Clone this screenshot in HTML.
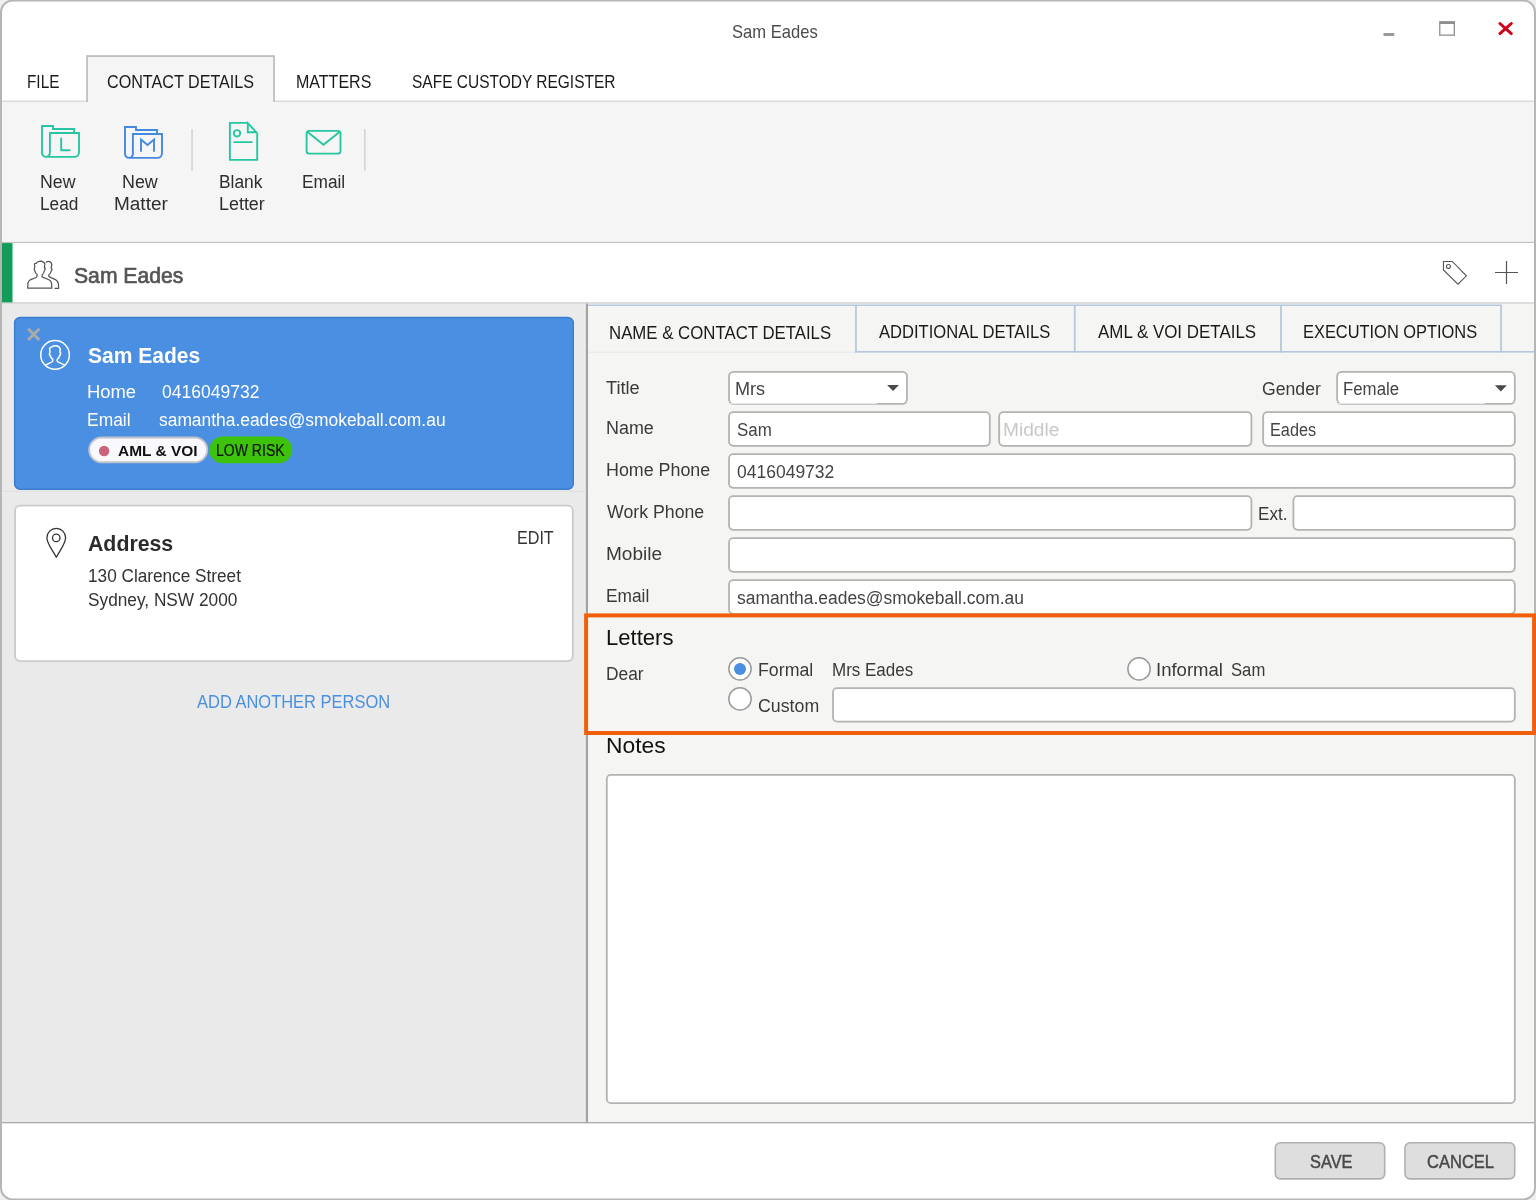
<!DOCTYPE html>
<html><head><meta charset="utf-8"><title>Sam Eades</title>
<style>
html,body{margin:0;padding:0;}
body{width:1536px;height:1200px;overflow:hidden;position:relative;background:#f0f0f0;font-family:"Liberation Sans",sans-serif;}
.t{position:absolute;white-space:nowrap;line-height:1;transform-origin:0 0;}
#tx{position:absolute;left:0;top:0;width:1536px;height:1200px;will-change:transform;}
svg{position:absolute;left:0;top:0;overflow:visible;}
</style></head><body>
<svg width="1536" height="1200" viewBox="0 0 1536 1200" fill="none">
<rect x="0" y="0" width="1536" height="1200" fill="#fff"/>
<rect x="0" y="101.7" width="1536" height="140.3" fill="#f5f5f5"/>
<rect x="0" y="100.6" width="1536" height="1.2" fill="#d2d2d2"/>
<rect x="0" y="241.9" width="1536" height="1.2" fill="#c0c0c0"/>
<rect x="86.2" y="55.2" width="188.7" height="46.8" fill="#bdbdbd"/>
<rect x="87.9" y="57.0" width="185.3" height="45.2" fill="#f5f5f5"/>
<rect x="191.2" y="129" width="1.7" height="41.6" fill="#d6d6d6"/>
<rect x="364.0" y="129" width="1.7" height="41.6" fill="#d6d6d6"/>
<rect x="0" y="243.1" width="1536" height="59.4" fill="#fff"/>
<rect x="0" y="302.4" width="1536" height="1.3" fill="#c4c4c4"/>
<rect x="2" y="243.1" width="10.5" height="59.3" fill="#119d58"/>
<rect x="0" y="303.7" width="586" height="818.3" fill="#eaeaea"/>
<rect x="588" y="303.7" width="948" height="818.3" fill="#f5f5f3"/>
<rect x="585.9" y="303.7" width="2.1" height="819.7" fill="#a2a2a2"/>
<rect x="0" y="1122" width="1536" height="1.6" fill="#adadad"/>
<rect x="0" y="1123.6" width="1536" height="76.4" fill="#fff"/>
<rect x="588" y="304.5" width="913.8" height="1.5" fill="#b7c9df"/>
<rect x="588" y="351.7" width="268" height="0.9" fill="#e1e6ed"/>
<rect x="855.1" y="351.0" width="678.9" height="1.6" fill="#b4c7dc"/>
<rect x="855.1" y="305" width="1.7" height="47.6" fill="#b4c7dc"/>
<rect x="1073.9" y="305" width="1.7" height="47.6" fill="#b4c7dc"/>
<rect x="1280.1" y="305" width="1.7" height="47.6" fill="#b4c7dc"/>
<rect x="1500.2" y="305" width="1.7" height="47.6" fill="#b4c7dc"/>
<rect x="14.65" y="317.45" width="558.60" height="171.80" rx="5.5" ry="5.5" stroke="#3d7dcf" stroke-width="1.5" fill="#4a8fe1"/>
<rect x="2" y="490.7" width="584" height="1.2" fill="#e0e0e0"/>
<rect x="89.15" y="437.45" width="118.10" height="24.80" rx="12.4" ry="12.4" stroke="#c0c2cc" stroke-width="1.9" fill="#f8f8fd"/>
<circle cx="104.1" cy="451" r="5.2" fill="#cb6478"/>
<rect x="209.3" y="436.5" width="82.9" height="26.7" rx="13.35" ry="13.35" fill="#3cc30a"/>
<rect x="15.10" y="505.70" width="557.70" height="155.40" rx="5" ry="5" stroke="#cbcbcb" stroke-width="1.8" fill="#fff"/>
<rect x="729.00" y="371.90" width="178.00" height="32.00" rx="4.6" ry="4.6" stroke="#b3b3b1" stroke-width="1.8" fill="#fff"/>
<rect x="731" y="402.7" width="146.1" height="1.0" fill="#fff"/>
<rect x="1337.10" y="371.90" width="177.70" height="32.00" rx="4.6" ry="4.6" stroke="#b3b3b1" stroke-width="1.8" fill="#fff"/>
<rect x="1339" y="402.7" width="146" height="1.0" fill="#fff"/>
<rect x="729.00" y="412.20" width="260.80" height="33.60" rx="4.2" ry="4.2" stroke="#b3b3b1" stroke-width="1.8" fill="#fff"/>
<rect x="999.20" y="412.20" width="252.20" height="33.60" rx="4.2" ry="4.2" stroke="#b3b3b1" stroke-width="1.8" fill="#fff"/>
<rect x="1263.20" y="412.20" width="251.60" height="33.60" rx="4.2" ry="4.2" stroke="#b3b3b1" stroke-width="1.8" fill="#fff"/>
<rect x="729.00" y="454.20" width="785.80" height="33.60" rx="4.2" ry="4.2" stroke="#b3b3b1" stroke-width="1.8" fill="#fff"/>
<rect x="729.00" y="496.20" width="522.40" height="33.60" rx="4.2" ry="4.2" stroke="#b3b3b1" stroke-width="1.8" fill="#fff"/>
<rect x="1293.40" y="496.20" width="221.40" height="33.60" rx="4.2" ry="4.2" stroke="#b3b3b1" stroke-width="1.8" fill="#fff"/>
<rect x="729.00" y="538.20" width="785.80" height="33.60" rx="4.2" ry="4.2" stroke="#b3b3b1" stroke-width="1.8" fill="#fff"/>
<rect x="729.00" y="580.20" width="785.80" height="33.60" rx="4.2" ry="4.2" stroke="#b3b3b1" stroke-width="1.8" fill="#fff"/>
<rect x="833.00" y="688.20" width="681.80" height="33.40" rx="4.2" ry="4.2" stroke="#b3b3b1" stroke-width="1.8" fill="#fff"/>
<rect x="606.80" y="774.90" width="908.00" height="328.20" rx="4.2" ry="4.2" stroke="#b3b3b1" stroke-width="1.8" fill="#fff"/>
<circle cx="740" cy="668.85" r="11.15" stroke="#9a9a9a" stroke-width="1.5" fill="#fff"/>
<circle cx="740" cy="669.05" r="6" fill="#4a8fe1"/>
<circle cx="740" cy="698.9" r="11.15" stroke="#9a9a9a" stroke-width="1.5" fill="#fff"/>
<circle cx="1139.05" cy="668.9" r="11.15" stroke="#9a9a9a" stroke-width="1.5" fill="#fff"/>
<rect x="1275.30" y="1142.80" width="109.40" height="36.10" rx="5" ry="5" stroke="#b0b0b0" stroke-width="1.6" fill="#dedede"/>
<rect x="1405.00" y="1142.80" width="109.70" height="36.10" rx="5" ry="5" stroke="#b0b0b0" stroke-width="1.6" fill="#dedede"/>
<rect x="1383.5" y="33" width="10.7" height="3" fill="#9a9a9a"/>
<rect x="1439.1" y="21.1" width="15.9" height="14.7" fill="#8f8f8f"/>
<rect x="1440.4" y="24.0" width="13.3" height="10.5" fill="#fff"/>
<path d="M1499.9,23.5 L1511.3,33.6 M1511.3,23.5 L1499.9,33.6" stroke="#d0021b" stroke-width="3" stroke-linecap="round"/>
<g stroke="#27c6a1" stroke-width="1.9" stroke-linejoin="miter">
<path d="M74,133 L74,129 L53,129 L53,126 L42,126 L42,152.4 A4,4.4 0 0 0 46,156.9 L74.4,156.9 A4.6,4.6 0 0 0 79,152.3 L79,133 L49.9,133 L49.9,152.4 A4,4.4 0 0 1 45.9,156.9"/>
<path d="M61.2,138.4 L61.2,150.3 L69.6,150.3" stroke-linecap="round"/>
</g>
<g stroke="#4389e1" stroke-width="1.9" transform="translate(83,1)">
<path d="M74,133 L74,129 L53,129 L53,126 L42,126 L42,152.4 A4,4.4 0 0 0 46,156.9 L74.4,156.9 A4.6,4.6 0 0 0 79,152.3 L79,133 L49.9,133 L49.9,152.4 A4,4.4 0 0 1 45.9,156.9"/>
<path d="M58,150.8 L58,138.6 L64.55,144 L71,138.6 L71,150.8" stroke-linejoin="miter"/>
</g>
<g stroke="#27c6a1" stroke-width="1.9">
<path d="M246.9,122.9 L229.9,122.9 L229.9,159.9 L257.2,159.9 L257.2,133.2"/>
<path d="M247.8,123.2 L247.8,132.3 L256.4,132.3 Z" stroke-linejoin="miter"/>
<circle cx="237" cy="133.3" r="3.2"/>
<path d="M234.2,142.2 L251.8,142.2" stroke-width="1.7" stroke-linecap="round"/>
</g>
<g stroke="#27c6a1" stroke-width="1.9">
<rect x="306.6" y="130.9" width="33.9" height="22.7" rx="2.6" ry="2.6"/>
<path d="M307.3,131.8 L323.5,144.7 L339.8,131.8"/>
</g>
<g stroke="#555" stroke-width="1.25" stroke-linejoin="round" stroke-linecap="round" transform="translate(20,252) scale(0.0375)">
<path vector-effect="non-scaling-stroke" d="M205,965 L212,830 Q220,770 270,745 L430,680 Q458,665 455,600 Q410,570 395,500 Q360,450 395,410 L385,320 Q385,300 430,300 Q470,250 545,245 Q640,250 665,320 L648,410 Q690,440 650,500 Q640,570 590,605 Q580,660 600,672 L770,740 Q830,770 840,830 L850,965 Z"/>
<path vector-effect="non-scaling-stroke" d="M700,272 Q730,248 770,250 Q840,262 850,340 L830,420 Q870,455 835,500 Q825,575 768,615 Q760,655 785,665 L960,745 Q1015,780 1025,850 L1030,970 L935,970"/>
</g>
<path d="M28.06,328.76 L39.34,340.04 M39.34,328.76 L28.06,340.04" stroke="#aaa" stroke-width="3"/>
<g stroke="#fff" stroke-width="1.5" stroke-linejoin="round">
<circle cx="55.05" cy="354.9" r="14.3"/>
<g transform="translate(20,320) scale(0.04583)">
<path vector-effect="non-scaling-stroke" d="M555,985 L700,915 Q725,900 715,860 Q680,830 665,790 Q625,740 655,700 L645,630 Q650,590 700,582 Q735,555 790,560 Q870,575 880,640 L870,700 Q905,735 860,790 Q850,830 810,862 Q800,900 825,915 L975,985"/>
</g>
</g>
<g stroke="#333" stroke-width="1.3">
<path d="M56.3,557.2 C52,549.5 46.9,543.5 46.9,537.8 A9.35,9.4 0 0 1 65.6,537.8 C65.6,543.5 60.6,549.5 56.3,557.2 Z" stroke-linejoin="round"/>
<circle cx="56.25" cy="537.9" r="3.75"/>
</g>
<g stroke="#555" stroke-width="1.1">
<path d="M1443.45,261.45 L1452.3,261.45 L1466.4,275.85 L1458,284.25 L1443.45,270 Z" stroke-linejoin="miter"/>
<circle cx="1448.4" cy="266.4" r="1.95"/>
</g>
<path d="M1495,272.5 L1518,272.5 M1506.5,261 L1506.5,284" stroke="#555" stroke-width="1.2"/>
<path d="M887.1,385 L899,385 L893.05,391.1 Z" fill="#4a4a4a"/>
<path d="M1494.9,385.3 L1506.8,385.3 L1500.85,391.4 Z" fill="#4a4a4a"/>
<path fill-rule="evenodd" fill="#efefef" d="M-5,-5 H1541 V1205 H-5 Z M12.5,-0.4 H1523.5 A12.5,12.5 0 0 1 1536,12.1 V1187.9 A12.5,12.5 0 0 1 1523.5,1200.4 H12.5 A12.5,12.5 0 0 1 0,1187.9 V12.1 A12.5,12.5 0 0 1 12.5,-0.4 Z"/>
<rect x="1" y="0.6" width="1534" height="1198.8" rx="11.5" ry="11.5" stroke="#b6b6b6" stroke-width="2" fill="none"/>
<rect x="586.1" y="615.4" width="948" height="117.6" stroke="#f0600c" stroke-width="4" fill="none"/>
</svg>
<div id="tx">
<div class="t" style="left:731.55px;top:24.00px;font-size:17.8px;transform:scaleX(0.9325);color:#4c4c4c;font-weight:400;">Sam Eades</div>
<div class="t" style="left:26.85px;top:73.00px;font-size:18.4px;transform:scaleX(0.8337);color:#1a1a1a;font-weight:400;">FILE</div>
<div class="t" style="left:106.61px;top:73.00px;font-size:18.4px;transform:scaleX(0.8778);color:#1a1a1a;font-weight:400;">CONTACT DETAILS</div>
<div class="t" style="left:295.59px;top:73.00px;font-size:18.4px;transform:scaleX(0.8710);color:#1a1a1a;font-weight:400;">MATTERS</div>
<div class="t" style="left:412.33px;top:73.00px;font-size:18.4px;transform:scaleX(0.8424);color:#1a1a1a;font-weight:400;">SAFE CUSTODY REGISTER</div>
<div class="t" style="left:39.52px;top:173.00px;font-size:18px;transform:scaleX(0.9853);color:#2e2e2e;font-weight:400;">New</div>
<div class="t" style="left:39.76px;top:195.00px;font-size:18px;transform:scaleX(0.9592);color:#2e2e2e;font-weight:400;">Lead</div>
<div class="t" style="left:122.01px;top:173.00px;font-size:18px;transform:scaleX(0.9940);color:#2e2e2e;font-weight:400;">New</div>
<div class="t" style="left:114.42px;top:195.00px;font-size:18px;transform:scaleX(1.0544);color:#2e2e2e;font-weight:400;">Matter</div>
<div class="t" style="left:219.15px;top:173.00px;font-size:18px;transform:scaleX(0.9651);color:#2e2e2e;font-weight:400;">Blank</div>
<div class="t" style="left:219.11px;top:195.00px;font-size:18px;transform:scaleX(0.9947);color:#2e2e2e;font-weight:400;">Letter</div>
<div class="t" style="left:301.56px;top:173.00px;font-size:18px;transform:scaleX(0.9597);color:#2e2e2e;font-weight:400;">Email</div>
<div class="t" style="left:73.86px;top:265.00px;font-size:22.4px;transform:scaleX(0.9448);color:#555;font-weight:400;-webkit-text-stroke:0.7px #555;">Sam Eades</div>
<div class="t" style="left:87.91px;top:346.00px;font-size:21.5px;transform:scaleX(0.9773);color:#fff;font-weight:700;">Sam Eades</div>
<div class="t" style="left:87.37px;top:383.00px;font-size:18px;transform:scaleX(1.0217);color:#fff;font-weight:400;">Home</div>
<div class="t" style="left:161.62px;top:383.00px;font-size:18px;transform:scaleX(0.9726);color:#fff;font-weight:400;">0416049732</div>
<div class="t" style="left:87.44px;top:411.00px;font-size:18px;transform:scaleX(0.9691);color:#fff;font-weight:400;">Email</div>
<div class="t" style="left:159.12px;top:411.00px;font-size:18px;transform:scaleX(0.9667);color:#fff;font-weight:400;">samantha.eades@smokeball.com.au</div>
<div class="t" style="left:117.99px;top:443.00px;font-size:15.2px;transform:scaleX(1.0180);color:#111;font-weight:700;">AML &amp; VOI</div>
<div class="t" style="left:216.36px;top:443.00px;font-size:16px;transform:scaleX(0.8767);color:#111;font-weight:400;-webkit-text-stroke:0.2px #111;">LOW RISK</div>
<div class="t" style="left:87.82px;top:533.00px;font-size:22px;transform:scaleX(0.9677);color:#2b2b2b;font-weight:700;">Address</div>
<div class="t" style="left:88.36px;top:567.00px;font-size:18px;transform:scaleX(0.9553);color:#333;font-weight:400;">130 Clarence Street</div>
<div class="t" style="left:87.93px;top:591.00px;font-size:18px;transform:scaleX(0.9590);color:#333;font-weight:400;">Sydney, NSW 2000</div>
<div class="t" style="left:517.29px;top:529.00px;font-size:18.4px;transform:scaleX(0.8759);color:#333;font-weight:400;">EDIT</div>
<div class="t" style="left:196.90px;top:693.00px;font-size:18.4px;transform:scaleX(0.8957);color:#4a90e2;font-weight:400;">ADD ANOTHER PERSON</div>
<div class="t" style="left:609.23px;top:324.00px;font-size:18.4px;transform:scaleX(0.9135);color:#1a1a1a;font-weight:400;">NAME &amp; CONTACT DETAILS</div>
<div class="t" style="left:879.40px;top:323.00px;font-size:18.4px;transform:scaleX(0.9012);color:#1a1a1a;font-weight:400;">ADDITIONAL DETAILS</div>
<div class="t" style="left:1098.30px;top:323.00px;font-size:18.4px;transform:scaleX(0.9208);color:#1a1a1a;font-weight:400;">AML &amp; VOI DETAILS</div>
<div class="t" style="left:1303.06px;top:323.00px;font-size:18.4px;transform:scaleX(0.8923);color:#1a1a1a;font-weight:400;">EXECUTION OPTIONS</div>
<div class="t" style="left:606.10px;top:379.00px;font-size:18px;transform:scaleX(1.0116);color:#3a3a3a;font-weight:400;">Title</div>
<div class="t" style="left:606.01px;top:419.00px;font-size:18px;transform:scaleX(0.9956);color:#3a3a3a;font-weight:400;">Name</div>
<div class="t" style="left:605.71px;top:461.00px;font-size:18px;transform:scaleX(0.9917);color:#3a3a3a;font-weight:400;">Home Phone</div>
<div class="t" style="left:606.50px;top:503.00px;font-size:18px;transform:scaleX(0.9846);color:#3a3a3a;font-weight:400;">Work Phone</div>
<div class="t" style="left:605.62px;top:545.00px;font-size:18px;transform:scaleX(1.0587);color:#3a3a3a;font-weight:400;">Mobile</div>
<div class="t" style="left:605.75px;top:587.00px;font-size:18px;transform:scaleX(0.9620);color:#3a3a3a;font-weight:400;">Email</div>
<div class="t" style="left:1262.42px;top:380.00px;font-size:18px;transform:scaleX(0.9806);color:#3a3a3a;font-weight:400;">Gender</div>
<div class="t" style="left:1258.42px;top:505.00px;font-size:18px;transform:scaleX(0.9480);color:#3a3a3a;font-weight:400;">Ext.</div>
<div class="t" style="left:734.89px;top:380.00px;font-size:18px;transform:scaleX(1.0040);color:#444;font-weight:400;">Mrs</div>
<div class="t" style="left:1342.69px;top:380.00px;font-size:18px;transform:scaleX(0.9342);color:#444;font-weight:400;">Female</div>
<div class="t" style="left:736.50px;top:421.00px;font-size:18px;transform:scaleX(0.9383);color:#444;font-weight:400;">Sam</div>
<div class="t" style="left:1003.21px;top:421.00px;font-size:18px;transform:scaleX(1.0616);color:#c8c8c8;font-weight:400;">Middle</div>
<div class="t" style="left:1270.44px;top:421.00px;font-size:18px;transform:scaleX(0.9034);color:#444;font-weight:400;">Eades</div>
<div class="t" style="left:736.57px;top:463.00px;font-size:18px;transform:scaleX(0.9721);color:#444;font-weight:400;">0416049732</div>
<div class="t" style="left:737.02px;top:589.00px;font-size:18px;transform:scaleX(0.9677);color:#444;font-weight:400;">samantha.eades@smokeball.com.au</div>
<div class="t" style="left:605.64px;top:627.00px;font-size:22.6px;transform:scaleX(0.9761);color:#111;font-weight:400;">Letters</div>
<div class="t" style="left:606.05px;top:665.00px;font-size:18px;transform:scaleX(0.9646);color:#3a3a3a;font-weight:400;">Dear</div>
<div class="t" style="left:757.62px;top:661.00px;font-size:18px;transform:scaleX(0.9868);color:#3a3a3a;font-weight:400;">Formal</div>
<div class="t" style="left:831.98px;top:661.00px;font-size:18px;transform:scaleX(0.9437);color:#3a3a3a;font-weight:400;">Mrs Eades</div>
<div class="t" style="left:1156.35px;top:661.00px;font-size:18px;transform:scaleX(1.0302);color:#3a3a3a;font-weight:400;">Informal</div>
<div class="t" style="left:1231.06px;top:661.00px;font-size:18px;transform:scaleX(0.9255);color:#3a3a3a;font-weight:400;">Sam</div>
<div class="t" style="left:757.81px;top:697.00px;font-size:18px;transform:scaleX(0.9863);color:#3a3a3a;font-weight:400;">Custom</div>
<div class="t" style="left:605.58px;top:735.00px;font-size:22.6px;transform:scaleX(1.0100);color:#111;font-weight:400;">Notes</div>
<div class="t" style="left:1309.79px;top:1153.00px;font-size:18.4px;transform:scaleX(0.8905);color:#484848;font-weight:400;-webkit-text-stroke:0.45px #484848;">SAVE</div>
<div class="t" style="left:1427.39px;top:1153.00px;font-size:18.4px;transform:scaleX(0.8988);color:#484848;font-weight:400;-webkit-text-stroke:0.45px #484848;">CANCEL</div>
</div>

</body></html>
